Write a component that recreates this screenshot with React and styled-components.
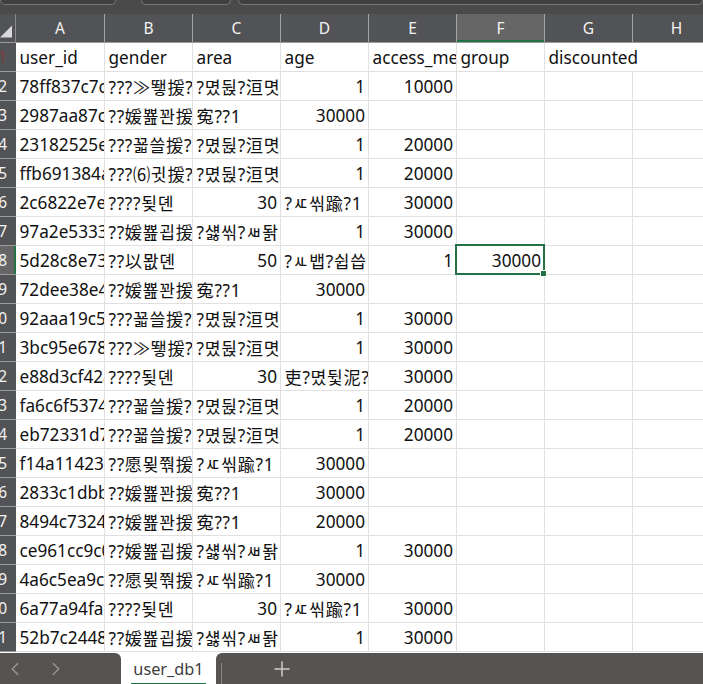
import React from "react";
import styled, { createGlobalStyle } from "styled-components";
import { ChevronLeft, ChevronRight, Plus } from "lucide-react";

const GlobalStyle = createGlobalStyle`
  html, body {
    margin: 0;
    padding: 0;
    width: 703px;
    height: 684px;
    overflow: hidden;
    background: #fff;
  }
`;

const COLUMNS = ["A", "B", "C", "D", "E", "F", "G", "H"];

const GANGNAM = "?몄뒩?洹몃뎄";
const BUSAN = "?섏씪?ㅽ돩";
const JEJU = "寃??1";
const SEOUL = "?ㅼ씪踰?1";

const rows = [
  ["user_id", "gender", "area", "age", "access_me", "group", "discounted"],
  ["78ff837c7c", "???≫뙣援?", GANGNAM, 1, 10000],
  ["2987aa87c0", "??媛뾾꽌援", JEJU, 30000, ""],
  ["23182525e1", "???꾧쓸援?", GANGNAM, 1, 20000],
  ["ffb691384a", "???⑹귓援?", GANGNAM, 1, 20000],
  ["2c6822e7e0", "????됮뎬", 30, SEOUL, 30000],
  ["97a2e53331", "??媛뾾굅援", BUSAN, 1, 30000],
  ["5d28c8e731", "??以뫖뎬", 50, "?ㅻ뱁?쉽씁", 1, 30000],
  ["72dee38e4a", "??媛뾾꽌援", JEJU, 30000, ""],
  ["92aaa19c5b", "???꾧쓸援?", GANGNAM, 1, 30000],
  ["3bc95e6781", "???≫뙣援?", GANGNAM, 1, 30000],
  ["e88d3cf42a", "????됮뎬", 30, "吏?몄뒻泥?", 30000],
  ["fa6c6f5374", "???꾧쓸援?", GANGNAM, 1, 20000],
  ["eb72331d7e", "???꾧쓸援?", GANGNAM, 1, 20000],
  ["f14a114231", "??愿묒쭦援", SEOUL, 30000, ""],
  ["2833c1dbb1", "??媛뾾꽌援", JEJU, 30000, ""],
  ["8494c73244", "??媛뾾꽌援", JEJU, 20000, ""],
  ["ce961cc9c0", "??媛뾾굅援", BUSAN, 1, 30000],
  ["4a6c5ea9c1", "??愿묒쭦援", SEOUL, 30000, ""],
  ["6a77a94fa0", "????됮뎬", 30, SEOUL, 30000],
  ["52b7c24488", "??媛뾾굅援", BUSAN, 1, 30000],
];

const Window = styled.div`
  width: 703px;
  height: 684px;
  display: flex;
  flex-direction: column;
  overflow: hidden;
  font-family: "Noto Sans", "Noto Sans CJK KR", sans-serif;
`;

const TabStrip = styled.div`
  height: 14px;
  box-sizing: border-box;
  display: flex;
  background: #4a4a4a;
`;

const TopTab = styled.div`
  width: ${(p) => p.$width}px;
  margin-left: ${(p) => p.$gap}px;
  height: 5px;
  box-sizing: border-box;
  background: #3f3f3f;
  border: 1px solid #777;
  border-top: none;
  border-radius: 0 0 6px 6px;
`;

const HeaderRow = styled.div`
  display: flex;
  height: 29px;
  box-sizing: border-box;
  background: #525356;
  border-bottom: 1px solid #9b9b9b;
`;

const Corner = styled.div`
  width: 16px;
  flex: none;
  display: flex;
  align-items: flex-end;
  justify-content: flex-end;
  box-sizing: border-box;
  padding: 0 3px 4px 0;
  border-right: 1px solid #8a8a8a;
`;

const ColumnHead = styled.div`
  width: ${(p) => p.$width}px;
  flex: none;
  box-sizing: border-box;
  display: flex;
  align-items: center;
  justify-content: center;
  font-size: 15.5px;
  color: #f2f2f2;
  border-right: 1px solid #a4a4a4;
  background: ${(p) => (p.$active ? "#666666" : "transparent")};
  box-shadow: ${(p) => (p.$active ? "inset 0 -2px 0 #217346" : "none")};
`;

const Sheet = styled.div`
  flex: 1;
  min-height: 0;
  background: #fff;
`;

const Row = styled.div`
  display: flex;
  height: 29px;
`;

const RowHead = styled.div`
  width: 16px;
  flex: none;
  box-sizing: border-box;
  display: flex;
  align-items: center;
  justify-content: flex-end;
  overflow: hidden;
  padding-right: 9px;
  font-size: 15.5px;
  white-space: nowrap;
  color: ${(p) => (p.$first ? "#7a3b3b" : "#f2f2f2")};
  background: ${(p) => (p.$active ? "#666666" : "#525356")};
  border-bottom: 1px solid #9b9b9b;
  box-shadow: ${(p) => (p.$active ? "inset -2px 0 0 #217346" : "none")};
`;

const Cell = styled.div`
  position: relative;
  width: ${(p) => p.$width}px;
  flex: none;
  box-sizing: border-box;
  padding: 0 3px 0 3.5px;
  display: flex;
  align-items: center;
  justify-content: ${(p) => (p.$number ? "flex-end" : "flex-start")};
  overflow: ${(p) => (p.$spill ? "visible" : "hidden")};
  white-space: nowrap;
  font-size: 17.2px;
  letter-spacing: ${(p) => (p.$hangul ? "0.7px" : "0")};
  color: #111;
  border-right: ${(p) => (p.$spill ? "none" : "1px solid #e0e0e0")};
  border-bottom: 1px solid #e0e0e0;
`;

const SelectedFrame = styled.div`
  position: absolute;
  left: -2px;
  top: -2px;
  right: -1px;
  bottom: -1px;
  border: 2px solid #217346;
  pointer-events: none;
`;

const FillHandle = styled.div`
  position: absolute;
  right: -4px;
  bottom: -4px;
  width: 5px;
  height: 5px;
  background: #217346;
  border: 1px solid #fff;
`;

const SelectedCell = styled(Cell)`
  overflow: visible;
  z-index: 1;
`;

const StatusBar = styled.div`
  height: 31px;
  flex: none;
  display: flex;
  background: #fff;
  color: #9a9792;
`;

const NavArea = styled.div`
  width: 121px;
  flex: none;
  display: flex;
  align-items: center;
  gap: 19px;
  padding-left: 4px;
  box-sizing: border-box;
  background: #575350;
  border-top-right-radius: 6px;
`;

const SheetTab = styled.div`
  position: relative;
  width: 95px;
  flex: none;
  background: #fff;
  display: flex;
  align-items: center;
  justify-content: center;
  font-size: 16.3px;
  color: #3c3c3c;

  &::after {
    content: "";
    position: absolute;
    left: 10px;
    right: 10px;
    bottom: 0;
    height: 1px;
    background: #217346;
  }
`;

const Tail = styled.div`
  flex: 1;
  display: flex;
  background: #575350;
  border-top-left-radius: 6px;
`;

const Divider = styled.div`
  width: 1px;
  height: 21px;
  margin: 10px 0 0 5px;
  background: #8a8683;
`;

const AddSheet = styled.div`
  margin-left: 48px;
  display: flex;
  align-items: center;
  color: #d0cdc9;
`;

const colWidth = (i) => (i === 0 ? 89 : 88);
const isHangul = (value) => /[^\x00-\x7f]/.test(String(value));

const App = () => {
  return (
    <Window>
      <GlobalStyle />
      <TabStrip>
        <TopTab $width={117} $gap={0} />
        <TopTab $width={91} $gap={25} />
        <TopTab $width={470} $gap={7} />
      </TabStrip>
      <HeaderRow>
        <Corner>
          <svg width="13" height="13" viewBox="0 0 13 13">
            <path d="M13 0V13H0Z" fill="#d9d9d9" />
          </svg>
        </Corner>
        {COLUMNS.map((c, i) => (
          <ColumnHead key={c} $width={colWidth(i)} $active={c === "F"}>
            {c}
          </ColumnHead>
        ))}
      </HeaderRow>
      <Sheet>
        {rows.map((row, r) => (
          <Row key={r}>
            <RowHead $first={r === 0} $active={r === 7}>
              {r + 1}
            </RowHead>
            {COLUMNS.map((c, i) => {
              const value = row[i] ?? "";
              const isNumber = typeof value === "number";
              if (r === 7 && c === "F") {
                return (
                  <SelectedCell key={c} $width={colWidth(i)} $number>
                    {value}
                    <SelectedFrame>
                      <FillHandle />
                    </SelectedFrame>
                  </SelectedCell>
                );
              }
              return (
                <Cell
                  key={c}
                  $width={colWidth(i)}
                  $number={isNumber}
                  $hangul={isHangul(value)}
                  $spill={r === 0 && c === "G"}
                >
                  {value}
                </Cell>
              );
            })}
          </Row>
        ))}
      </Sheet>
      <StatusBar>
        <NavArea>
          <ChevronLeft size={22} strokeWidth={1.5} />
          <ChevronRight size={22} strokeWidth={1.5} />
        </NavArea>
        <SheetTab>user_db1</SheetTab>
        <Tail>
          <Divider />
          <AddSheet>
            <Plus size={24} strokeWidth={1.5} />
          </AddSheet>
        </Tail>
      </StatusBar>
    </Window>
  );
};

export default App;
